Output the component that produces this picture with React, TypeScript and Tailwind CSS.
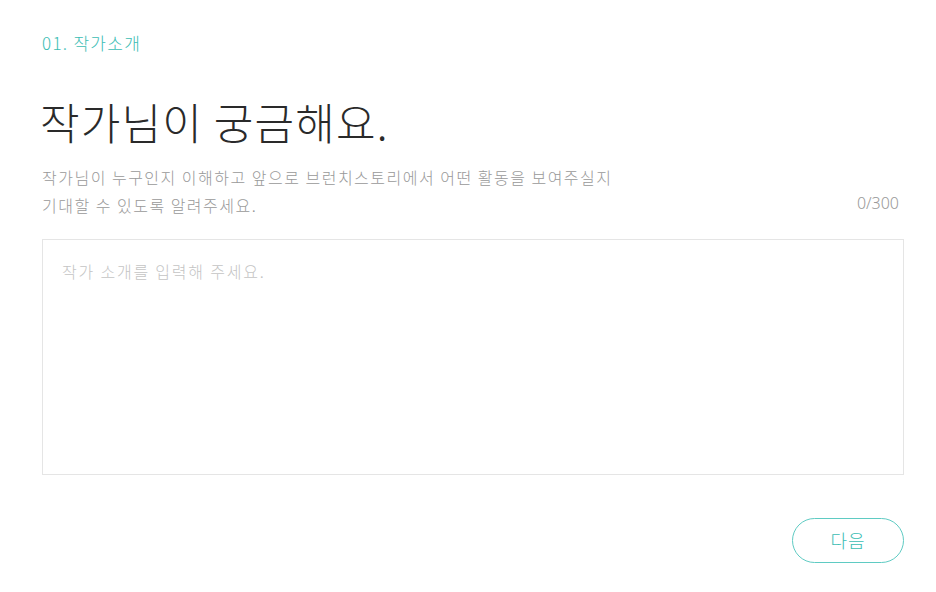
import React, { useState } from 'react';

const ko = '"Noto Sans CJK KR", "Noto Sans", sans-serif';

export default function App() {
  const [text, setText] = useState('');

  return (
    <div className="min-h-screen w-full bg-white" style={{ fontFamily: ko }}>
      <div className="pl-[42px] pr-[32px] pt-[30px] w-[936px]">
        <p className="text-[17px] leading-[26px] tracking-[1.3px] text-[#3cbdb4] font-light">01. 작가소개</p>

        <h1 className="mt-[38px] text-[43px] leading-[54px] text-[#2a2a2a] font-light tracking-[1.2px] -ml-[2px]">
          작가님이 궁금해요.
        </h1>

        <div className="mt-[15px] flex items-end justify-between pr-[5px]">
          <p className="text-[16px] leading-[28px] tracking-[1.5px] text-[#999] font-light">
            작가님이 누구인지 이해하고 앞으로 브런치스토리에서 어떤 활동을 보여주실지
            <br />
            기대할 수 있도록 알려주세요.
          </p>
          <span className="text-[16px] leading-[28px] mb-[2px] text-[#999] font-light" style={{ fontFamily: '"Noto Sans", sans-serif' }}>
            {text.length}/300
          </span>
        </div>

        <textarea
          value={text}
          onChange={e => setText(e.target.value.slice(0, 300))}
          placeholder="작가 소개를 입력해 주세요."
          className="mt-[20px] block w-full h-[236px] resize-none border border-[#e5e5e5] px-[19px] py-[17px] text-[16px] leading-[28px] tracking-[1.8px] text-[#333] font-light outline-none placeholder:text-[#c4c4c4]"
        />

        <div className="mt-[43px] flex justify-end">
          <button className="w-[112px] h-[45px] rounded-full border border-[#5fcbc3] text-[18px] tracking-[1px] text-[#3cbdb4] font-light bg-white">
            다음
          </button>
        </div>
      </div>
    </div>
  );
}
